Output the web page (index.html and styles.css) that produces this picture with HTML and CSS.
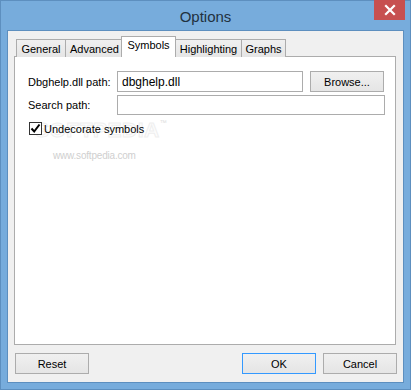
FILE: index.html
```html
<!DOCTYPE html>
<html>
<head>
<meta charset="utf-8">
<link rel="stylesheet" href="styles.css">
</head>
<body>
<div class="window">
  <div class="titlebar">
    <span class="title">Options</span>
    <div class="close">
      <svg width="12" height="12" viewBox="0 0 12 12"><path d="M2 2 L10 10 M10 2 L2 10" stroke="#fff" stroke-width="2.2" stroke-linecap="square"/></svg>
    </div>
  </div>
  <div class="client">
    <div class="tabs">
      <div class="tab">General</div>
      <div class="tab">Advanced</div>
      <div class="tab active">Symbols</div>
      <div class="tab">Highlighting</div>
      <div class="tab">Graphs</div>
    </div>
    <div class="panel">
      <div class="form">
        <label class="lbl">Dbghelp.dll path:</label>
        <div class="input">dbghelp.dll</div>
        <div class="btn browse">Browse...</div>
        <label class="lbl">Search path:</label>
        <div class="input wide"></div>
      </div>
      <div class="wm-big">SOFTPEDIA<sup>™</sup></div>
      <div class="check-row">
        <span class="checkbox">
          <svg width="11" height="11" viewBox="0 0 11 11"><path d="M1.5 5.5 L4.2 8.5 L9.5 1.5" fill="none" stroke="#000" stroke-width="2"/></svg>
        </span>
        <span class="check-label">Undecorate symbols</span>
      </div>
      <div class="wm-url">www.softpedia.com</div>
    </div>
    <div class="footer">
      <div class="btn">Reset</div>
      <div class="spacer"></div>
      <div class="btn default">OK</div>
      <div class="btn">Cancel</div>
    </div>
  </div>
</div>
</body>
</html>
```
FILE: styles.css
```css
* { box-sizing: border-box; }
html, body { margin: 0; padding: 0; }
body {
  width: 411px;
  height: 390px;
  overflow: hidden;
  font-family: "Liberation Sans", Arial, sans-serif;
  font-size: 11px;
  color: #000;
}
.window {
  width: 411px;
  height: 390px;
  background: #77acdc;
  border: 1px solid #5d8fbf;
  padding: 0 6px 6px 6px;
  display: flex;
  flex-direction: column;
  position: relative;
}
.titlebar {
  height: 29px;
  display: flex;
  align-items: center;
  justify-content: center;
  flex: none;
}
.title {
  font-size: 15px;
  color: #22313f;
  margin-top: 1px;
}
.close {
  position: absolute;
  top: -1px;
  left: 373px;
  width: 31px;
  height: 20px;
  background: #c75050;
  display: flex;
  align-items: center;
  justify-content: center;
}
.client {
  flex: 1;
  background: #f0f0f0;
  border: 1px solid #5d8fbf;
  padding: 6px 7px 8px 6px;
  display: flex;
  flex-direction: column;
}
.tabs {
  display: flex;
  align-items: flex-end;
  padding-left: 2px;
  height: 20px;
  position: relative;
  z-index: 2;
  margin-bottom: -1px;
}
.tab {
  height: 18px;
  border: 1px solid #acacac;
  border-bottom: none;
  background: linear-gradient(#f0f0f0, #e5e5e5);
  margin-right: -1px;
  display: flex;
  align-items: center;
  justify-content: center;
  line-height: 1;
  padding-top: 2px;
  white-space: nowrap;
}
.tab:nth-child(1) { width: 50px; }
.tab:nth-child(2) { width: 59px; }
.tab:nth-child(4) { width: 67px; }
.tab:nth-child(5) { width: 45px; }
.tab.active {
  height: 21px;
  width: 55px;
  background: #fff;
  margin-left: -2px;
  margin-right: -2px;
  position: relative;
  z-index: 3;
  padding-top: 0;
  padding-bottom: 3px;
}
.tab.active + .tab { margin-left: 1px; }
.panel {
  flex: 1;
  background: #fff;
  border: 1px solid #acacac;
  padding: 14px 11px 0 13px;
  position: relative;
}
.form {
  display: grid;
  grid-template-columns: 89px 1fr 74px;
  column-gap: 7px;
  row-gap: 3px;
  align-items: center;
}
.lbl { white-space: nowrap; }
.input {
  height: 21px;
  border: 1px solid #acacac;
  background: #fff;
  margin-left: -7px;
  padding: 0 4px;
  display: flex;
  align-items: center;
  font-size: 12px;
}
.input.wide {
  grid-column: 2 / 4;
  height: 20px;
  margin-right: -1px;
}
.btn {
  height: 21px;
  width: 74px;
  border: 1px solid #acacac;
  background: linear-gradient(#f0f0f0, #e5e5e5);
  display: flex;
  align-items: center;
  justify-content: center;
}
.btn.default { border-color: #3399ff; }
.check-row {
  display: flex;
  align-items: center;
  margin-top: 7px;
  margin-left: 1px;
  position: relative;
  z-index: 1;
}
.checkbox {
  width: 13px;
  height: 13px;
  border: 1px solid #333;
  background: #fff;
  display: flex;
  align-items: center;
  justify-content: center;
  margin-right: 2px;
}
.wm-big {
  position: absolute;
  left: 20px;
  top: 61px;
  font-size: 21px;
  font-weight: bold;
  color: #fdfdfd;
  -webkit-text-stroke: 1px #efefef;
  letter-spacing: 0.5px;
  white-space: nowrap;
  z-index: 0;
}
.wm-big sup { font-size: 7px; font-weight: normal; vertical-align: top; position: relative; top: 1px; -webkit-text-stroke: 0; color: #dddddd; }
.wm-url {
  position: absolute;
  left: 38px;
  top: 93px;
  font-size: 10px;
  color: #cfcfcf;
  letter-spacing: -0.2px;
}
.footer {
  display: flex;
  gap: 7px;
  margin-top: 8px;
  padding-left: 1px;
  margin-right: -1px;
}
.spacer { flex: 1; }
```
